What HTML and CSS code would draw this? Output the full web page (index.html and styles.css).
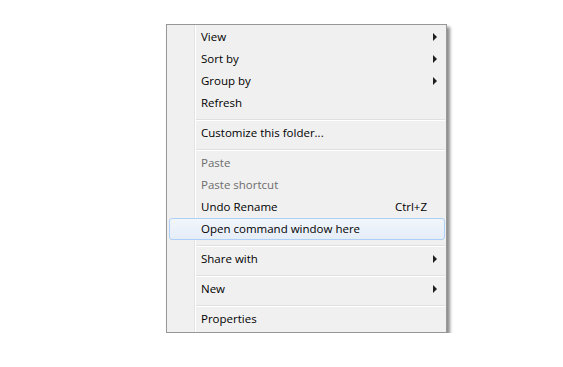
FILE: index.html
```html
<!DOCTYPE html>
<html lang="en">
<head>
    <meta charset="UTF-8">
    <title>Context menu</title>
    <link rel="stylesheet" href="styles.css">
</head>
<body>

<div class="menu">
    <div class="item"><span class="label">View</span><span class="arrow"></span></div>
    <div class="item"><span class="label">Sort by</span><span class="arrow"></span></div>
    <div class="item"><span class="label">Group by</span><span class="arrow"></span></div>
    <div class="item"><span class="label">Refresh</span></div>
    <div class="separator"></div>
    <div class="item"><span class="label">Customize this folder...</span></div>
    <div class="separator"></div>
    <div class="item disabled"><span class="label">Paste</span></div>
    <div class="item disabled"><span class="label">Paste shortcut</span></div>
    <div class="item"><span class="label">Undo Rename</span><span class="shortcut">Ctrl+Z</span></div>
    <div class="item active"><span class="label">Open command window here</span></div>
    <div class="separator"></div>
    <div class="item"><span class="label">Share with</span><span class="arrow"></span></div>
    <div class="separator"></div>
    <div class="item"><span class="label">New</span><span class="arrow"></span></div>
    <div class="separator"></div>
    <div class="item"><span class="label">Properties</span></div>
</div>

</body>
</html>
```

FILE: styles.css
```css
body {
    margin: 0;
    padding: 24px 0 0 166px;
    background-color: #ffffff;
    font-family: "Segoe UI", "Open Sans", sans-serif;
    font-size: 11.5px;
}

.menu {
    width: 281px;
    box-sizing: border-box;
    border: 1px solid #979797;
    padding: 1px 1px 2px 2px;
    background-color: #f0f0f0;
    /* gutter line next to the icon column */
    background-image: linear-gradient(to right,
        #f0f0f0 27px, #e2e3e3 27px, #e2e3e3 28px,
        #ffffff 28px, #ffffff 29px, #f0f0f0 29px);
    box-shadow: 3px 3px 3px rgba(0, 0, 0, 0.45);
}

.item {
    display: flex;
    align-items: center;
    height: 22px;
    box-sizing: border-box;
    border: 1px solid transparent;
    border-radius: 3px;
    padding: 0 7px 1px 31px;
    color: #000000;
}

.item .label {
    flex: 1;
}

.item.disabled {
    color: #6d6d6d;
}

.item.active {
    border-color: #aecff7;
    background: linear-gradient(to bottom, #f2f6fb, #e5edf8);
}

.shortcut {
    margin-right: 10px;
}

.arrow {
    width: 0;
    height: 0;
    border-left: 4px solid #1e1e1e;
    border-top: 4px solid transparent;
    border-bottom: 4px solid transparent;
}

.separator {
    height: 8px;
    box-sizing: border-box;
    margin-left: 27px;
    padding-top: 5px;
}

.separator::after {
    content: "";
    display: block;
    height: 1px;
    background-color: #e0e0e0;
    border-bottom: 1px solid #ffffff;
}
```
